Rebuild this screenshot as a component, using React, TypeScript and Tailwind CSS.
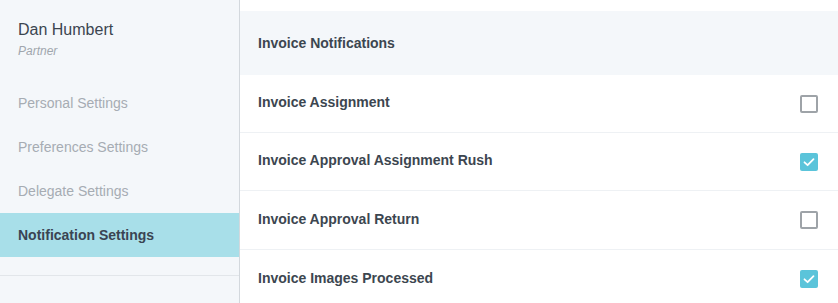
import React from "react";

const items = [
  { label: "Invoice Assignment", checked: false },
  { label: "Invoice Approval Assignment Rush", checked: true },
  { label: "Invoice Approval Return", checked: false },
  { label: "Invoice Images Processed", checked: true },
];

const menu = [
  { label: "Personal Settings", active: false },
  { label: "Preferences Settings", active: false },
  { label: "Delegate Settings", active: false },
  { label: "Notification Settings", active: true },
];

function Checkbox({ checked }: { checked: boolean }) {
  if (checked) {
    return (
      <div className="w-[18px] h-[18px] rounded-[2px] bg-[#5bc4da] flex items-center justify-center">
        <svg width="14" height="14" viewBox="0 0 14 14" fill="none">
          <path d="M2.5 7.3 L5.6 10.2 L11.5 4.2" stroke="#ffffff" strokeWidth="1.8" strokeLinecap="round" strokeLinejoin="round" />
        </svg>
      </div>
    );
  }
  return <div className="w-[18px] h-[18px] rounded-[2px] border-2 border-[#9ea3a8] bg-white" />;
}

export default function App() {
  return (
    <div className="flex w-[838px] h-[303px] overflow-hidden bg-white" style={{ fontFamily: '"Liberation Sans", Arial, sans-serif' }}>
      <aside className="w-[240px] shrink-0 bg-[#f4f7fa] border-r border-[#d3d8dd] flex flex-col">
        <div className="pl-[18px] pt-[20px] h-[81px]">
          <div className="text-[16px] leading-[20px] text-[#3b4550]">Dan Humbert</div>
          <div className="text-[12px] leading-[16px] italic text-[#a0a6ad] mt-[3px]">Partner</div>
        </div>
        {menu.map((m) => (
          <div
            key={m.label}
            className={
              m.active
                ? "h-[44px] flex items-center pl-[18px] text-[14px] font-bold text-[#3a4452] bg-[#a8dfe9]"
                : "h-[44px] flex items-center pl-[18px] text-[14px] text-[#a6acb3]"
            }
          >
            {m.label}
          </div>
        ))}
        <div className="mt-[18px] border-t border-[#e2e6ea]" />
      </aside>
      <main className="flex-1 pt-[11px]">
        <div className="h-[64px] bg-[#f4f7fa] flex items-center pl-[18px] text-[14px] font-bold text-[#3c4650]">
          Invoice Notifications
        </div>
        {items.map((it, i) => (
          <div
            key={it.label}
            className={
              (i < 2 ? "h-[58px] " : "h-[59px] ") +
              "border-b border-[#eef1f4] flex items-center justify-between pl-[18px] pr-[20px]"
            }
          >
            <span className="text-[14px] font-bold text-[#3c4650] -mt-[2px]">{it.label}</span>
            <Checkbox checked={it.checked} />
          </div>
        ))}
      </main>
    </div>
  );
}
